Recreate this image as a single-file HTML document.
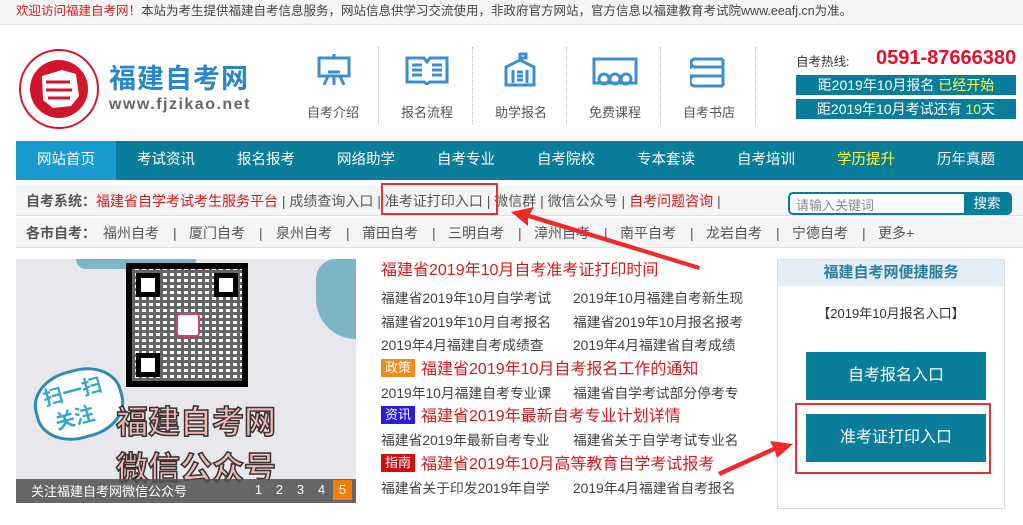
<!DOCTYPE html>
<html><head><meta charset="utf-8"><style>
*{margin:0;padding:0;box-sizing:border-box}
body{width:1023px;height:525px;overflow:hidden;background:#fff;font-family:"Liberation Sans","Noto Sans CJK SC",sans-serif;font-size:13px;color:#333;position:relative}
.a{position:absolute;white-space:nowrap}
.top{left:0;top:0;width:1023px;height:25px;background:#f5f5f5;border-bottom:1px solid #ddd;font-size:12.5px;line-height:22px;padding-left:16px;color:#444}
.nav{left:16px;top:141px;width:1007px;height:39px;background:#0a7d9b}
.nav span{position:absolute;top:0;line-height:39px;font-size:14.5px;color:#fff;width:100px;text-align:center}
.row{left:16px;width:1007px;height:30px;background:#f5f5f5;border-bottom:1px solid #e2e2e2;line-height:30px;font-size:14px;padding-left:10px;color:#555}
.red{color:#d51b1b}
.ic{stroke:#3b8fd0;fill:none;stroke-width:3}
.lst div{height:23.5px;line-height:23.5px;font-size:13.8px;color:#444}
.lst span{display:inline-block;width:192px}
.tag{display:inline-block;color:#fff;font-size:13px;padding:0 4px;line-height:18px;margin-right:6px;position:relative;vertical-align:2px}
.lst .hl{font-size:16px;color:#d51b1b}
.ct{position:absolute;top:0}
</style></head><body>
<div class="a top"><span class="red">欢迎访问福建自考网！</span>本站为考生提供福建自考信息服务，网站信息供学习交流使用，非政府官方网站，官方信息以福建教育考试院www.eeafj.cn为准。</div>

<svg class="a" style="left:18px;top:48px" width="82" height="82" viewBox="0 0 82 82"><circle cx="41" cy="41" r="39" fill="#fff" stroke="#d0152d" stroke-width="2"/><circle cx="41" cy="41" r="29" fill="#d0152d"/><path d="M24 28 l20-6 14 4 3 22 -8 10 -18 2 -10-8z" fill="#fff"/><path d="M28 34h24M28 42h26M30 50h22" stroke="#d0152d" stroke-width="3"/></svg>
<div class="a" style="left:109px;top:57px;font-size:27px;font-weight:bold;color:#2a86c8;letter-spacing:1px">福建自考网</div>
<div class="a" style="left:109px;top:96px;font-size:16px;font-weight:bold;color:#666;letter-spacing:1.5px">www.fjzikao.net</div>

<div class="a" style="left:378px;top:47px;height:78px;border-left:1px dotted #bbb"></div>
<div class="a" style="left:472px;top:47px;height:78px;border-left:1px dotted #bbb"></div>
<div class="a" style="left:566px;top:47px;height:78px;border-left:1px dotted #bbb"></div>
<div class="a" style="left:660px;top:47px;height:78px;border-left:1px dotted #bbb"></div>
<div class="a" style="left:755px;top:47px;height:78px;border-left:1px dotted #bbb"></div>
<svg class="a" style="left:316px;top:53px" width="36" height="32"><rect class="ic" x="3" y="5" width="30" height="18"/><path class="ic" d="M18 1v4M12 23l-4 9M24 23l4 9M18 23v9M12 19h12" stroke-width="2.5"/></svg>
<svg class="a" style="left:404px;top:55px" width="46" height="30"><path class="ic" d="M3 3h17l3 4 3-4h17v24h-17l-3 2-3-2h-17z M8 10h10M8 15h10M8 20h10M28 10h10M28 15h10M28 20h10" stroke-width="2.5"/></svg>
<svg class="a" style="left:502px;top:52px" width="36" height="36"><path class="ic" d="M18 1v7 M18 2h6v4h-6 M4 15l14-7 14 7v18h-28z M11 18v13M25 18v13 M15 20h6M15 24h6M15 28h6" stroke-width="2.5"/></svg>
<svg class="a" style="left:592px;top:57px" width="46" height="30"><rect class="ic" x="2" y="2" width="42" height="24"/><circle class="ic" cx="12" cy="22" r="5"/><circle class="ic" cx="23" cy="22" r="5"/><circle class="ic" cx="34" cy="22" r="5"/></svg>
<svg class="a" style="left:690px;top:55px" width="38" height="34"><path class="ic" d="M5 4h28M5 4a4 4 0 0 0 0 8h28 M2 12a4 4 0 0 0 0 9h32 M5 21a5 5 0 0 0 0 10h28 M33 4v27" stroke-width="3"/></svg>
<div class="a" style="left:307px;top:102px;font-size:13px;color:#555">自考介绍</div>
<div class="a" style="left:401px;top:102px;font-size:13px;color:#555">报名流程</div>
<div class="a" style="left:495px;top:102px;font-size:13px;color:#555">助学报名</div>
<div class="a" style="left:589px;top:102px;font-size:13px;color:#555">免费课程</div>
<div class="a" style="left:683px;top:102px;font-size:13px;color:#555">自考书店</div>

<div class="a" style="left:796px;top:51px;font-size:12.5px;color:#333">自考热线:</div>
<div class="a" style="left:876px;top:47px;font-size:20px;font-weight:bold;color:#e2112d">0591-87666380</div>
<div class="a" style="left:796px;top:75px;width:220px;height:20px;background:#0a7d9b;color:#fff;font-size:14px;line-height:20px;text-align:center">距2019年10月报名 <span style="color:#ffff3a">已经开始</span></div>
<div class="a" style="left:796px;top:99px;width:220px;height:20px;background:#0a7d9b;color:#fff;font-size:14px;line-height:20px;text-align:center">距2019年10月考试还有 <span style="color:#ffff3a">10</span>天</div>

<div class="a nav"><span style="left:0;background:#1a9bd0">网站首页</span><span style="left:100px">考试资讯</span><span style="left:200px">报名报考</span><span style="left:300px">网络助学</span><span style="left:400px">自考专业</span><span style="left:500px">自考院校</span><span style="left:600px">专本套读</span><span style="left:700px">自考培训</span><span style="left:800px;color:#ffff3a">学历提升</span><span style="left:900px">历年真题</span></div>

<div class="a row" style="top:186px"><b style="color:#555">自考系统：</b><span class="red">福建省自学考试考生服务平台</span> | 成绩查询入口 | 准考证打印入口 | 微信群 | 微信公众号 | <span class="red">自考问题咨询</span> |</div>
<div class="a row" style="top:218px;padding:0">
<b class="ct" style="left:10px;color:#555">各市自考：</b>
<span class="ct" style="left:87px">福州自考</span><span class="ct" style="left:157px">|</span>
<span class="ct" style="left:173px">厦门自考</span><span class="ct" style="left:243px">|</span>
<span class="ct" style="left:260px">泉州自考</span><span class="ct" style="left:330px">|</span>
<span class="ct" style="left:346px">莆田自考</span><span class="ct" style="left:416px">|</span>
<span class="ct" style="left:432px">三明自考</span><span class="ct" style="left:502px">|</span>
<span class="ct" style="left:518px">漳州自考</span><span class="ct" style="left:588px">|</span>
<span class="ct" style="left:604px">南平自考</span><span class="ct" style="left:674px">|</span>
<span class="ct" style="left:690px">龙岩自考</span><span class="ct" style="left:760px">|</span>
<span class="ct" style="left:776px">宁德自考</span><span class="ct" style="left:846px">|</span>
<span class="ct" style="left:862px">更多+</span>
</div>
<div class="a" style="left:788px;top:192px;width:224px;height:23px;border:2px solid #0a7d9b;border-radius:5px;background:#fff;overflow:hidden"><span style="position:absolute;left:6px;top:1px;font-size:13px;color:#888">请输入关键词</span><span style="position:absolute;right:0;top:0;width:46px;height:19px;background:#0a7d9b;color:#fff;font-size:13.5px;line-height:19px;text-align:center">搜索</span></div>
<div class="a" style="left:381px;top:183px;width:117px;height:32px;border:2px solid #e53333"></div>

<!-- banner -->
<div class="a" style="left:16px;top:259px;width:340px;height:244px;background:#e8e8ec;overflow:hidden">
<div style="position:absolute;left:300px;top:0;width:50px;height:80px;background:#5fa7bd;border-radius:20px 0 0 40px;opacity:.8"></div>
<div style="position:absolute;left:60px;top:-10px;width:120px;height:20px;background:#5fa7bd;border-radius:10px;opacity:.8"></div>
<div style="position:absolute;left:110px;top:4px;width:122px;height:124px;background:#000;padding:6px"><div style="width:110px;height:112px;background:#fff;position:relative;overflow:hidden">
<div style="position:absolute;inset:0;background:repeating-linear-gradient(90deg,#000 0 3px,transparent 3px 7px),repeating-linear-gradient(0deg,#000 0 3px,transparent 3px 6px);opacity:.6"></div>
<div style="position:absolute;left:4px;top:4px;width:24px;height:24px;border:5px solid #000;background:#fff"></div>
<div style="position:absolute;right:4px;top:4px;width:24px;height:24px;border:5px solid #000;background:#fff"></div>
<div style="position:absolute;left:4px;bottom:4px;width:24px;height:24px;border:5px solid #000;background:#fff"></div>
<div style="position:absolute;left:44px;top:44px;width:24px;height:24px;background:#fff;border:2px solid #d04070;border-radius:4px"></div>
</div></div>
<div style="position:absolute;left:18px;top:110px;width:90px;height:70px;background:#fff;border:3px solid #2b8bb8;border-radius:45%;transform:rotate(-15deg)"></div>
<div style="position:absolute;left:30px;top:120px;font-size:20px;font-weight:bold;color:#37a6c8;transform:rotate(-15deg);line-height:26px">扫一扫<br>&nbsp;关注</div>
<div style="position:absolute;left:100px;top:140px;font-size:32px;font-weight:bold;color:#f5b8b8;-webkit-text-stroke:1.5px #333;line-height:46px;white-space:nowrap">福建自考网<br>微信公众号</div>
<div style="position:absolute;left:0;top:220px;width:340px;height:24px;background:rgba(80,80,80,.85)"></div>
<div style="position:absolute;left:15px;top:222px;font-size:13px;color:#fff">关注福建自考网微信公众号</div>
<div style="position:absolute;left:233px;top:221px;font-size:13px;color:#fff;line-height:20px">
<span style="display:inline-block;width:19px;text-align:center;background:#666">1</span><span style="display:inline-block;width:19px;text-align:center;background:#666;margin-left:2px">2</span><span style="display:inline-block;width:19px;text-align:center;background:#666;margin-left:2px">3</span><span style="display:inline-block;width:19px;text-align:center;background:#666;margin-left:2px">4</span><span style="display:inline-block;width:19px;text-align:center;background:#f47c0c;margin-left:2px">5</span></div>
</div>

<div class="a lst" style="left:381px;top:260px">
<div class="hl" style="height:27px;line-height:22px">福建省2019年10月自考准考证打印时间</div>
<div><span>福建省2019年10月自学考试</span>2019年10月福建自考新生现</div>
<div><span>福建省2019年10月自考报名</span>福建省2019年10月报名报考</div>
<div><span>2019年4月福建自考成绩查</span>2019年4月福建省自考成绩</div>
<div class="hl" style="height:24px;line-height:24px"><i class="tag" style="background:#f58a1c;font-style:normal">政策</i>福建省2019年10月自考报名工作的通知</div>
<div><span>2019年10月福建自考专业课</span>福建省自学考试部分停考专</div>
<div class="hl" style="height:24px;line-height:24px"><i class="tag" style="background:#2b1ae0;font-style:normal">资讯</i>福建省2019年最新自考专业计划详情</div>
<div><span>福建省2019年最新自考专业</span>福建省关于自学考试专业名</div>
<div class="hl" style="height:24px;line-height:24px"><i class="tag" style="background:#d00d0d;font-style:normal">指南</i>福建省2019年10月高等教育自学考试报考</div>
<div><span>福建省关于印发2019年自学</span>2019年4月福建省自考报名</div>
</div>

<div class="a" style="left:777px;top:259px;width:228px;height:250px;border:1px solid #ddd;background:#fff">
<div style="height:26px;background:#e3eef7;text-align:center;font-size:15px;font-weight:bold;color:#2b7da0;line-height:26px">福建自考网便捷服务</div>
<div style="text-align:center;font-size:13px;margin-top:17px;color:#333">【2019年10月报名入口】</div>
</div>
<div class="a" style="left:806px;top:352px;width:180px;height:48px;background:#0a7d9b;color:#fff;font-size:16px;text-align:center;line-height:48px">自考报名入口</div>
<div class="a" style="left:806px;top:414px;width:180px;height:48px;background:#0a7d9b;color:#fff;font-size:16px;text-align:center;line-height:48px">准考证打印入口</div>
<div class="a" style="left:795px;top:403px;width:196px;height:71px;border:2px solid #e53333"></div>

<svg class="a" style="left:0;top:0" width="1023" height="525"><g fill="#ee2a2a"><path d="M700 266 L530 214 L534 207 L511 212 L528 226 L528 218 L699 270z"/><path d="M720 476 L775 451 L777 458 L793 444 L770 441 L773 447 L718 472z"/></g></svg>
</body></html>
